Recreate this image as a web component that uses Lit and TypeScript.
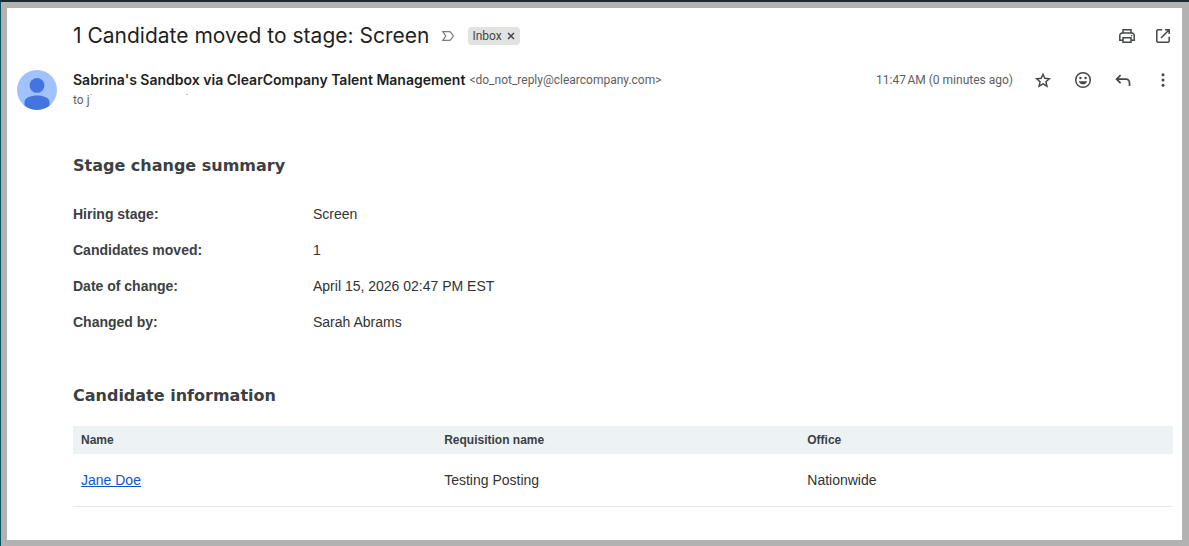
import { LitElement, html, css, svg } from "lit";
import { customElement } from "lit/decorators.js";

const icons = {
  print: svg`<path d="M6 7V3.8h8V7M6 14.2H2.8V9.3A2.3 2.3 0 0 1 5.1 7h9.8a2.3 2.3 0 0 1 2.3 2.3v4.9H14M6 11.7h8v4.6H6z"/><circle cx="14.6" cy="9.6" r=".8" fill="currentColor" stroke="none"/>`,
  open: svg`<path d="M9.2 3.8H5A1.2 1.2 0 0 0 3.8 5v10A1.2 1.2 0 0 0 5 16.2h10a1.2 1.2 0 0 0 1.2-1.2v-4.2M12 3.8h4.2V8M16.2 3.8L8 12"/>`,
  star: svg`<path stroke-width="1.4" stroke-linejoin="miter" d="M10 4.2l1.800 4.100 4.600.400-3.500 3 1.100 4.500L10 13.800l-4 2.400 1.100-4.500-3.500-3 4.600-.400z"/>`,
  smile: svg`<circle cx="10" cy="10" r="7.3"/><g fill="currentColor" stroke="none"><circle cx="7.4" cy="8" r="1.2"/><circle cx="12.6" cy="8" r="1.2"/><path d="M5.8 11.2h8.4a4.4 4.4 0 0 1-8.4 0z"/></g>`,
  reply: svg`<path stroke-width="1.7" d="M7.600 5.200L3.600 9.200l4 4M3.800 9.200H13a3.500 3.500 0 0 1 3.500 3.500V16"/>`,
  more: svg`<g fill="currentColor" stroke="none"><circle cx="10" cy="4.8" r="1.5"/><circle cx="10" cy="10" r="1.5"/><circle cx="10" cy="15.2" r="1.5"/></g>`,
};

@customElement("app-root")
export class AppRoot extends LitElement {
  static styles = css`
    :host {
      display: flex;
      box-sizing: border-box;
      min-height: 100vh;
      padding: 6px 7px 6px 6px;
      border-top: 2px solid #1c2a30;
      border-left: 1px solid #0b5163;
      background: #b2b2b2;
      color: #3c4043;
      font: 14px/20px "Liberation Sans", Arial, sans-serif;
    }
    .message {
      flex: 1;
      min-width: 0;
      background: #fff;
      padding: 14px 9px 32px 10px;
    }
    .subject-row {
      display: flex;
      align-items: center;
      height: 28px;
      padding-left: 56px;
    }
    .subject {
      margin: 0;
      font: 400 21px/28px Inter, sans-serif;
      color: #1f1f1f;
    }
    .importance { margin-left: 12px; color: #7a7c7b; }
    .label {
      display: flex;
      align-items: center;
      gap: 5px;
      height: 18px;
      margin-left: 13px;
      padding: 0 5px 0 4px;
      border-radius: 4px;
      background: #e1e3e1;
      color: #444746;
      font: 12px/18px Roboto, sans-serif;
    }
    .tools { display: flex; gap: 16px; margin-left: auto; }
    button {
      display: flex;
      margin: 0;
      padding: 0;
      border: 0;
      background: none;
      color: #444746;
      cursor: pointer;
    }
    svg { display: block; fill: none; stroke: currentColor; stroke-width: 1.5; }
    .sender-row {
      display: flex;
      align-items: flex-start;
      margin-top: 20px;
      font-family: Roboto, sans-serif;
    }
    .avatar { margin-right: 16px; stroke: none; }
    .who { flex: 1; min-width: 0; }
    .from { display: flex; gap: 4px; }
    .name { font: 600 14px/20px Inter, sans-serif; color: #1f1f1f; }
    .address, .to, .time { font-size: 12px; line-height: 20px; color: #5e5e5e; }
    .to { display: flex; }
    .speck { width: 2px; height: 1px; margin-top: 4px; background: #c4c4c4; }
    .speck + .speck { margin-left: 94px; }
    .actions { display: flex; gap: 20px; }
    .body { padding: 46px 0 0 56px; }
    h2 {
      margin: 0;
      font: 700 16px/20px "DejaVu Sans", Verdana, sans-serif;
    }
    .facts {
      display: grid;
      grid-template-columns: 240px 1fr;
      row-gap: 16px;
      margin: 28px 0 54px;
    }
    .facts dt { font-weight: 700; }
    .facts dd { margin: 0; color: #333; }
    .candidates {
      width: 100%;
      margin-top: 20px;
      border-collapse: collapse;
      table-layout: fixed;
      text-align: left;
      color: #333;
    }
    .candidates th {
      width: 33%;
      padding: 4px 8px;
      background: #edf2f5;
      color: #3c4043;
      font-size: 12px;
    }
    .candidates th:last-child { width: 34%; }
    .candidates td { padding: 16px 8px; border-bottom: 1px solid #e8e8e8; }
    a { color: #1155cc; }
  `;

  facts = [
    ["Hiring stage:", "Screen"],
    ["Candidates moved:", "1"],
    ["Date of change:", "April 15, 2026 02:47 PM EST"],
    ["Changed by:", "Sarah Abrams"],
  ];

  candidates = [{ name: "Jane Doe", requisition: "Testing Posting", office: "Nationwide" }];

  iconButton(label: string, icon: keyof typeof icons) {
    return html`<button type="button" aria-label=${label}>
      <svg width="20" height="20" viewBox="0 0 20 20">${icons[icon]}</svg>
    </button>`;
  }

  render() {
    return html`
      <main class="message">
        <header>
          <div class="subject-row">
            <h1 class="subject">1 Candidate moved to stage: Screen</h1>
            <button class="importance" type="button" aria-label="Mark as important">
              <svg width="14" height="12" viewBox="0 0 14 12">
                <path stroke-width="1.2" d="M1.8 1.6H8.4Q9.2 1.6 9.7 2.3L12.4 6 9.7 9.7Q9.2 10.4 8.4 10.4H1.8L4.8 6z"/>
              </svg>
            </button>
            <span class="label">
              Inbox
              <button type="button" aria-label="Remove label Inbox">
                <svg width="8" height="8" viewBox="0 0 8 8"><path d="M1 1l6 6M7 1L1 7"/></svg>
              </button>
            </span>
            <div class="tools">
              ${this.iconButton("Print", "print")}
              ${this.iconButton("Open in new window", "open")}
            </div>
          </div>
          <div class="sender-row">
            <svg class="avatar" width="40" height="40" viewBox="0 0 40 40">
              <circle cx="20" cy="20" r="20" fill="#a0c3ff"/>
              <circle cx="20" cy="15.4" r="7.4" fill="#4374e0"/>
              <path fill="#4374e0" d="M7.5 35.6V32c0-4 6-6.400 12.500-6.400S32.500 28 32.500 32v3.600A20 20 0 0 1 7.500 35.600z"/>
            </svg>
            <div class="who">
              <div class="from">
                <span class="name">Sabrina's Sandbox via ClearCompany Talent Management</span>
                <span class="address">&lt;do_not_reply@clearcompany.com&gt;</span>
              </div>
              <div class="to">to j<span class="speck"></span><span class="speck"></span></div>
            </div>
            <div class="actions">
              <span class="time">11:47&#8239;AM (0 minutes ago)</span>
              ${this.iconButton("Star", "star")}
              ${this.iconButton("Add reaction", "smile")}
              ${this.iconButton("Reply", "reply")}
              ${this.iconButton("More", "more")}
            </div>
          </div>
        </header>
        <div class="body">
          <h2>Stage change summary</h2>
          <dl class="facts">
            ${this.facts.map(([term, value]) => html`<dt>${term}</dt><dd>${value}</dd>`)}
          </dl>
          <h2>Candidate information</h2>
          <table class="candidates">
            <thead>
              <tr><th>Name</th><th>Requisition name</th><th>Office</th></tr>
            </thead>
            <tbody>
              ${this.candidates.map((c) => html`<tr>
                <td><a href="#">${c.name}</a></td>
                <td>${c.requisition}</td>
                <td>${c.office}</td>
              </tr>`)}
            </tbody>
          </table>
        </div>
      </main>
    `;
  }
}
